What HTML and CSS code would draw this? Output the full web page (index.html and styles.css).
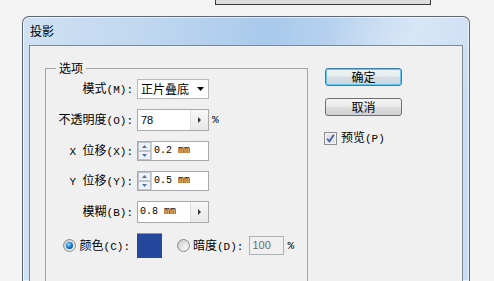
FILE: index.html
```html
<!DOCTYPE html>
<html lang="zh-CN">
<head>
    <meta charset="UTF-8">
    <meta name="viewport" content="width=device-width, initial-scale=1.0">
    <title>投影</title>
    <link rel="stylesheet" href="styles.css">
</head>
<body>
    <div class="topbar"></div>
    <div class="window">
        <div class="titlebar">投影</div>
        <div class="client">
            <fieldset class="group">
                <legend>选项</legend>
                <div class="form">
                    <label class="lbl">模式<span class="en">(M):</span></label>
                    <div class="ctl">
                        <div class="select">
                            <span>正片叠底</span>
                            <svg width="7" height="4" viewBox="0 0 7 4"><path d="M0 0h7L3.5 4z" fill="#000"/></svg>
                        </div>
                    </div>

                    <label class="lbl">不透明度<span class="en">(O):</span></label>
                    <div class="ctl">
                        <div class="field tall">
                            <span class="val num">78</span>
                            <span class="step">
                                <svg width="3" height="6" viewBox="0 0 3 6"><path d="M0 0l3 3L0 6z" fill="#333"/></svg>
                            </span>
                        </div>
                        <span class="unit en">%</span>
                    </div>

                    <label class="lbl"><span class="en">X </span>位移<span class="en">(X):</span></label>
                    <div class="ctl">
                        <div class="field">
                            <span class="spinner">
                                <svg width="13" height="18" viewBox="0 0 13 18">
                                    <rect x="0.5" y="0.5" width="12" height="8" fill="#eef1f5" stroke="#bcc4cf"/>
                                    <rect x="0.5" y="9.5" width="12" height="8" fill="#eef1f5" stroke="#bcc4cf"/>
                                    <path d="M4 6h5L6.5 3z" fill="#5a6f9c"/>
                                    <path d="M4 12h5L6.5 15z" fill="#5a6f9c"/>
                                </svg>
                            </span>
                            <span class="val mono pad">0.2 <span class="unit-mm">mm</span></span>
                        </div>
                    </div>

                    <label class="lbl"><span class="en">Y </span>位移<span class="en">(Y):</span></label>
                    <div class="ctl">
                        <div class="field">
                            <span class="spinner">
                                <svg width="13" height="18" viewBox="0 0 13 18">
                                    <rect x="0.5" y="0.5" width="12" height="8" fill="#eef1f5" stroke="#bcc4cf"/>
                                    <rect x="0.5" y="9.5" width="12" height="8" fill="#eef1f5" stroke="#bcc4cf"/>
                                    <path d="M4 6h5L6.5 3z" fill="#5a6f9c"/>
                                    <path d="M4 12h5L6.5 15z" fill="#5a6f9c"/>
                                </svg>
                            </span>
                            <span class="val mono pad">0.5 <span class="unit-mm">mm</span></span>
                        </div>
                    </div>

                    <label class="lbl">模糊<span class="en">(B):</span></label>
                    <div class="ctl">
                        <div class="field tall">
                            <span class="val mono">0.8 <span class="unit-mm">mm</span></span>
                            <span class="step">
                                <svg width="3" height="6" viewBox="0 0 3 6"><path d="M0 0l3 3L0 6z" fill="#333"/></svg>
                            </span>
                        </div>
                    </div>

                    <label class="lbl radio-lbl">
                        <svg class="radio" width="13" height="13" viewBox="0 0 13 13">
                            <defs>
                                <linearGradient id="rimA" x1="0" y1="0" x2="1" y2="1"><stop offset="0" stop-color="#c4c4c4"/><stop offset="1" stop-color="#f6f6f6"/></linearGradient>
                                <radialGradient id="dot" cx="0.4" cy="0.35" r="0.7"><stop offset="0" stop-color="#a6e6ff"/><stop offset="0.5" stop-color="#1f8ad6"/><stop offset="1" stop-color="#0c4d94"/></radialGradient>
                            </defs>
                            <circle cx="6.5" cy="6.5" r="6" fill="url(#rimA)" stroke="#8a8a8a"/>
                            <circle cx="6.5" cy="6.5" r="3.5" fill="url(#dot)"/>
                        </svg>
                        <span>颜色<span class="en">(C):</span></span>
                    </label>
                    <div class="ctl">
                        <span class="swatch"></span>
                        <svg class="radio off" width="13" height="13" viewBox="0 0 13 13">
                            <defs>
                                <linearGradient id="rimB" x1="0" y1="0" x2="1" y2="1"><stop offset="0" stop-color="#c4c4c4"/><stop offset="1" stop-color="#f6f6f6"/></linearGradient>
                                <linearGradient id="inB" x1="0" y1="0" x2="1" y2="1"><stop offset="0" stop-color="#d2d2d2"/><stop offset="1" stop-color="#fafafa"/></linearGradient>
                            </defs>
                            <circle cx="6.5" cy="6.5" r="6" fill="url(#rimB)" stroke="#8a8a8a"/>
                            <circle cx="6.5" cy="6.5" r="4" fill="url(#inB)"/>
                        </svg>
                        <span class="dim-lbl">暗度<span class="en">(D):</span></span>
                        <span class="disabled num">100</span>
                        <span class="unit en">%</span>
                    </div>
                </div>
            </fieldset>

            <div class="side">
                <div class="btn default">确定</div>
                <div class="btn">取消</div>
                <label class="check">
                    <svg width="13" height="13" viewBox="0 0 13 13">
                        <rect x="0.5" y="0.5" width="12" height="12" fill="#f4f4f4" stroke="#8e8f8f"/>
                        <rect x="2" y="2" width="9" height="9" fill="#e2e4e8"/>
                        <path d="M3.2 6.8l2.2 2.6L9.8 2.8" stroke="#3f58a0" stroke-width="1.7" fill="none"/>
                    </svg>
                    <span>预览<span class="en">(P)</span></span>
                </label>
            </div>
        </div>
    </div>
</body>
</html>
```

FILE: styles.css
```css
body {
    margin: 0;
    height: 281px;
    overflow: hidden;
    background: #f3f3f3;
    font-family: "Noto Sans CJK SC", sans-serif;
    font-size: 12px;
    color: #000;
}
.en {
    font-family: "Liberation Mono", monospace;
    font-size: 11px;
}
.mono {
    font-family: "Liberation Mono", monospace;
    font-size: 10px;
    white-space: pre;
}
.unit-mm {
    color: #000;
    background: transparent;
}
.num {
    font-family: "Liberation Sans", sans-serif;
    font-size: 11px;
}
.topbar {
    margin-left: 215px;
    width: 216px;
    height: 5px;
    box-sizing: border-box;
    background: #dcdcdc;
    border: 1px solid #3a3a3a;
    border-top: none;
}
.window {
    margin: 11px 0 0 22px;
    width: 448px;
    height: 265px;
    box-sizing: border-box;
    padding: 0 6px;
    border: 1px solid #5f6975;
    border-bottom: none;
    border-radius: 7px 7px 0 0;
    background:
        linear-gradient(115deg, rgba(255,255,255,0) 55%, rgba(255,255,255,0.35) 70%, rgba(255,255,255,0) 85%),
        linear-gradient(to right, #cfe1f3 0%, #bed6ef 30%, #a9c9eb 55%, #bcd5f0 75%, #c9ddf3 100%);
    box-shadow: inset 0 0 0 1px rgba(255,255,255,0.6);
}
.titlebar {
    height: 28px;
    box-sizing: border-box;
    padding: 6px 0 0 1px;
    line-height: 16px;
}
.client {
    display: flex;
    height: 237px;
    box-sizing: border-box;
    padding: 14px 0 0 15px;
    background: #f0f0f0;
    border: 1px solid #7f8994;
    border-bottom: none;
}
.group {
    margin: 0;
    padding: 3px 0 0 0;
    width: 263px;
    height: 222px;
    box-sizing: border-box;
    border: 1px solid #a5a5a5;
    border-bottom: none;
}
.group legend {
    margin-left: 10px;
    padding: 0 3px;
    line-height: 16px;
}
.form {
    display: grid;
    grid-template-columns: 87px auto;
    grid-template-rows: 20px 22px 20px 20px 22px 25px;
    column-gap: 4px;
    row-gap: 10px;
    align-items: center;
}
.lbl {
    text-align: right;
    line-height: 16px;
    white-space: nowrap;
}
.radio-lbl {
    display: flex;
    justify-content: flex-end;
    align-items: center;
    gap: 4px;
    padding-right: 3px;
}
.ctl {
    display: flex;
    align-items: center;
}
.select {
    display: flex;
    align-items: center;
    justify-content: space-between;
    width: 72px;
    height: 20px;
    box-sizing: border-box;
    padding: 0 3px 0 3px;
    background: #fff;
    border: 1px solid #b8b8b8;
    line-height: 16px;
}
.select svg { margin-right: 1px; }
.field {
    display: flex;
    width: 72px;
    height: 20px;
    box-sizing: border-box;
    background: #fff;
    border: 1px solid #a9a9a9;
}
.field.tall { height: 22px; }
.field .val {
    flex: 1;
    padding-left: 2px;
    line-height: 20px;
}
.field .val.num { padding-left: 3px; }
.field .val.pad { padding-left: 2px; line-height: 18px; }
.step {
    display: flex;
    align-items: center;
    justify-content: center;
    width: 17px;
    background: linear-gradient(#f8f8f8, #e8e8e8);
    border-left: 1px solid #e0e0e0;
}
.spinner {
    display: flex;
    width: 13px;
    border-right: 1px solid #c9ced6;
}
.unit { margin-left: 3px; }
.swatch {
    width: 25px;
    height: 25px;
    box-sizing: border-box;
    background: #23489c;
    border-top: 1px solid #8d93a3;
}
.radio.off { margin-left: 15px; }
.dim-lbl {
    margin-left: 3px;
    line-height: 16px;
    white-space: nowrap;
}
.disabled {
    margin-left: 6px;
    width: 35px;
    height: 19px;
    box-sizing: border-box;
    padding-left: 2px;
    line-height: 17px;
    color: #6d6d6d;
    background: #f0f0f0;
    border: 1px solid #adb2b5;
}
.side {
    display: flex;
    flex-direction: column;
    width: 77px;
    margin: 8px 0 0 17px;
}
.btn {
    height: 18px;
    box-sizing: border-box;
    margin-bottom: 12px;
    text-align: center;
    line-height: 16px;
    border: 1px solid #707070;
    border-radius: 3px;
    background: linear-gradient(#f4f4f4 0%, #ececec 45%, #dedede 50%, #d0d0d0 100%);
}
.btn.default {
    border-color: #3c7fb1;
    box-shadow: inset 0 0 0 1px #5fc6f2;
    background: linear-gradient(#f0f4f7 0%, #e6ecf0 45%, #d6dfe5 50%, #ccd6dd 100%);
}
.check {
    display: flex;
    align-items: center;
    gap: 4px;
    margin: 1px 0 0 -1px;
    line-height: 16px;
    white-space: nowrap;
}
```
